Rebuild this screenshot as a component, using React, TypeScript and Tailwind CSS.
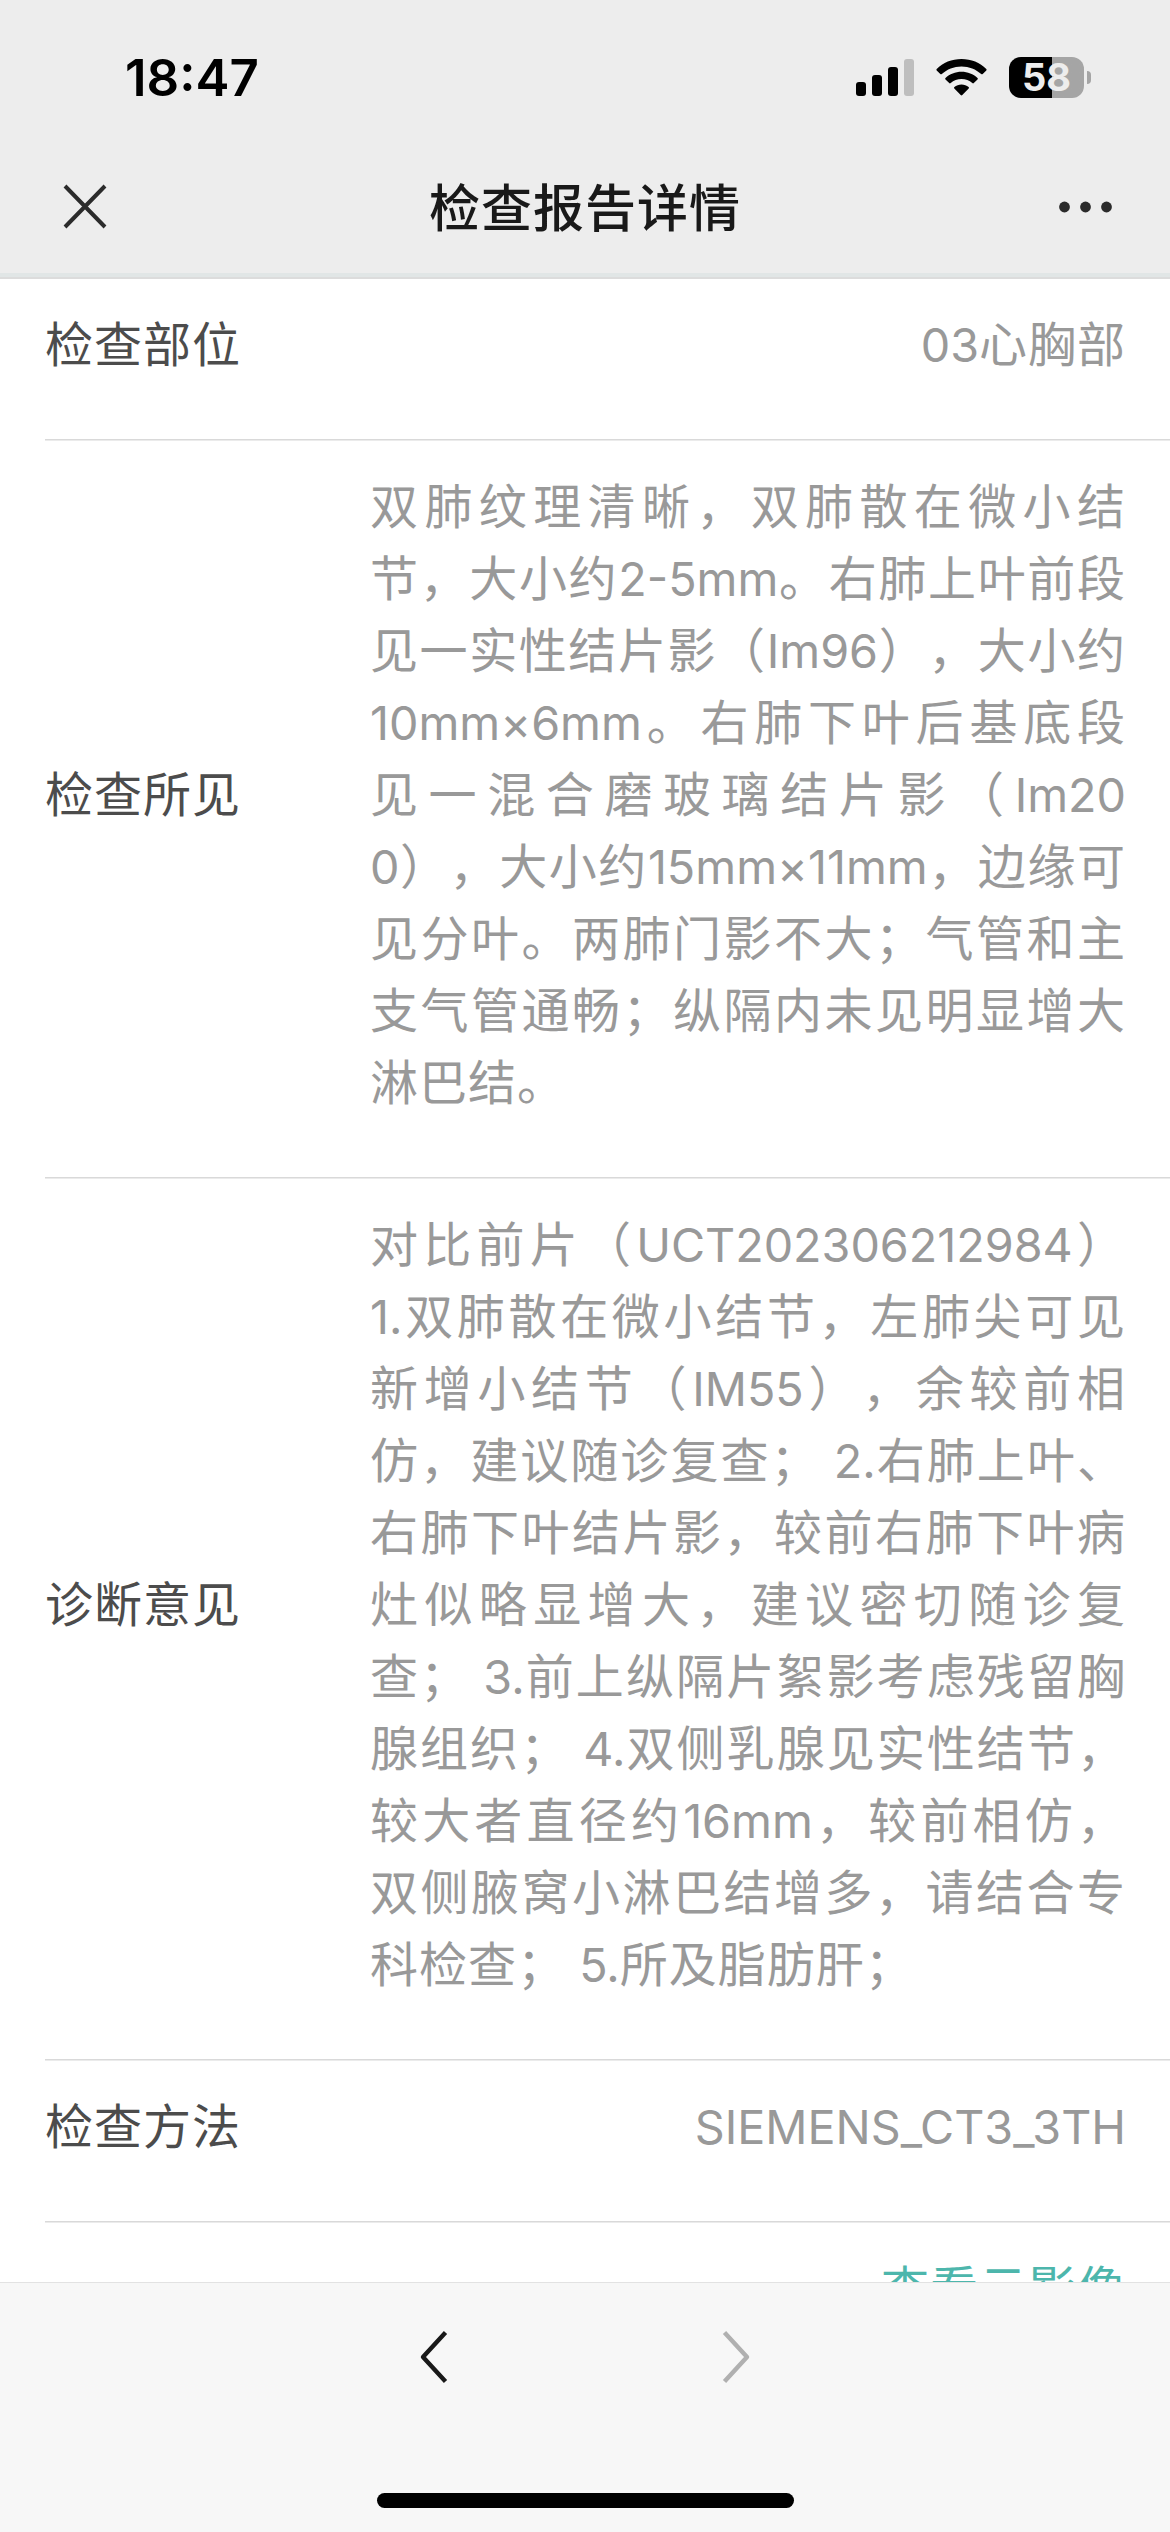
import type { ReactNode } from 'react';

const CJK = "font-['Noto_Sans_CJK_SC','Inter',sans-serif]";

const findings = [
  '双肺纹理清晰，双肺散在微小结',
  '节，大小约2-5mm。右肺上叶前段',
  '见一实性结片影（Im96），大小约',
  '10mm×6mm。右肺下叶后基底段',
  '见一混合磨玻璃结片影（Im20',
  '0），大小约15mm×11mm，边缘可',
  '见分叶。两肺门影不大；气管和主',
  '支气管通畅；纵隔内未见明显增大',
  '淋巴结。',
];

const diagnosis = [
  '对比前片（UCT202306212984）',
  '1.双肺散在微小结节，左肺尖可见',
  '新增小结节（IM55），余较前相',
  '仿，建议随诊复查； 2.右肺上叶、',
  '右肺下叶结片影，较前右肺下叶病',
  '灶似略显增大，建议密切随诊复',
  '查； 3.前上纵隔片絮影考虑残留胸',
  '腺组织； 4.双侧乳腺见实性结节，',
  '较大者直径约16mm，较前相仿，',
  '双侧腋窝小淋巴结增多，请结合专',
  '科检查； 5.所及脂肪肝；',
];

/* Latin runs are set in Inter, slightly smaller than the Chinese text. */
function Mixed({ text }: { text: string }) {
  return (
    <>
      {text.split(/([\x20-\x7e×]+)/).map((part, i) =>
        i % 2 ? (
          <span key={i} className="font-['Inter',sans-serif] text-[46.7px] leading-none tracking-[0px]">
            {part}
          </span>
        ) : (
          part
        ),
      )}
    </>
  );
}

function Paragraph({ lines }: { lines: string[] }) {
  return (
    <div className="w-[756px]">
      {lines.map((line, i) => (
        <div
          key={i}
          className={
            i === lines.length - 1
              ? 'h-[72px] whitespace-nowrap'
              : 'h-[72px] text-justify [text-align-last:justify]'
          }
        >
          <Mixed text={line} />
        </div>
      ))}
    </div>
  );
}

function Row({ label, children }: { label: string; children: ReactNode }) {
  return (
    <div className="ml-[45px]">
      <div className="flex items-center justify-between pt-[26px] pr-[44px] pb-[62px]">
        <div className="text-[#4c4c4c]">{label}</div>
        {children}
      </div>
      <div className="h-[2px] border-t border-[#d9d9d9] bg-[#ebebeb]" />
    </div>
  );
}

function StatusIcons() {
  return (
    <div className="flex items-center">
      <svg width="58" height="37" viewBox="0 0 58 37">
        <rect x="0" y="23" width="10" height="14" rx="3" fill="#000" />
        <rect x="16" y="16" width="10" height="21" rx="3" fill="#000" />
        <rect x="32" y="8" width="10" height="29" rx="3" fill="#000" />
        <rect x="48" y="0" width="10" height="37" rx="3" fill="#bebebe" />
      </svg>
      <svg className="ml-[22px]" width="51" height="37" viewBox="0 0 51 37">
        <path
          d="M25.5 0C35.2 0 44 3.7 50.3 9.9Q51 10.6 50.3 11.4L46.7 15Q46 15.7 45.2 15C40 10.2 33.1 7.4 25.5 7.4S11 10.2 5.8 15Q5 15.7 4.3 15L.7 11.4Q0 10.6.7 9.9C7 3.7 15.8 0 25.5 0Z"
          fill="#000"
        />
        <path
          d="M25.5 12.8C31.7 12.8 37.3 15.1 41.5 18.9Q42.3 19.7 41.5 20.4L37.8 24.1Q37.1 24.8 36.3 24.1C33.4 21.6 29.6 20.1 25.5 20.1S17.6 21.6 14.7 24.1Q13.9 24.8 13.2 24.1L9.5 20.4Q8.7 19.7 9.5 18.9C13.7 15.1 19.3 12.8 25.5 12.8Z"
          fill="#000"
        />
        <path
          d="M25.5 25.5C28.2 25.5 30.7 26.4 32.6 28Q33.4 28.8 32.7 29.5L26.3 36.1Q25.5 36.9 24.7 36.1L18.3 29.5Q17.6 28.8 18.4 28C20.3 26.4 22.8 25.5 25.5 25.5Z"
          fill="#000"
        />
      </svg>
      <div className="ml-[22px] flex h-[41px] w-[75px] items-center justify-center rounded-[12px] bg-linear-to-r from-black from-[57.3%] to-[#a5a5a5] to-[57.3%] font-['Inter',sans-serif] text-[38px] leading-[41px] font-bold tracking-[0px] text-[#ededed]">
        58
      </div>
      <div className="ml-[3px] h-[13px] w-[4px] rounded-r-full bg-[#a5a5a5]" />
    </div>
  );
}

export default function App() {
  return (
    <div
      className={`${CJK} flex h-[2532px] w-[1170px] flex-col overflow-hidden bg-white text-[48px] leading-[72px] tracking-[1px] text-[#999] [text-spacing-trim:space-all]`}
      lang="zh-CN"
    >
      <header className="h-[273px] shrink-0 bg-[#ededed]">
        <div className="flex h-[155px] items-center justify-between pr-[79px] pl-[125px]">
          <div className="font-['Inter',sans-serif] text-[51px] leading-[60px] font-semibold tracking-[0px] text-black">
            18:47
          </div>
          <StatusIcons />
        </div>
        <div className="flex h-[102px] items-center justify-between px-[55px]">
          <svg width="60" height="60" viewBox="0 0 60 60" fill="none" stroke="#2b2b2b" strokeWidth="4">
            <path d="M10 10L50 51M50 10L10 51" />
          </svg>
          <div className="pb-[3px] text-[51px] font-medium tracking-[1px] text-[#191919]">检查报告详情</div>
          <svg width="60" height="60" viewBox="0 0 60 60" fill="#2b2b2b">
            <circle cx="9.5" cy="31" r="5.4" />
            <circle cx="30.5" cy="31" r="5.4" />
            <circle cx="51.5" cy="31" r="5.4" />
          </svg>
        </div>
      </header>
      <div className="h-[6px] shrink-0 border-b-2 border-[#dcdcdc] bg-[#e1e6e6]" />

      <main className="h-[2003px] shrink-0 overflow-hidden">
        <Row label="检查部位">
          <div className="h-[72px]">
            <Mixed text="03心胸部" />
          </div>
        </Row>
        <Row label="检查所见">
          <Paragraph lines={findings} />
        </Row>
        <Row label="诊断意见">
          <Paragraph lines={diagnosis} />
        </Row>
        <Row label="检查方法">
          <div className="h-[72px]">
            <Mixed text="SIEMENS_CT3_3TH" />
          </div>
        </Row>
        <div className="pt-[26px] pr-[44px] text-right text-[#4db6ac]">查看云影像</div>
      </main>

      <footer className="flex grow flex-col items-center border-t border-[#e2e2e2] bg-[#f7f7f7]">
        <div className="mt-[44px] flex w-[340px] justify-between">
          <svg width="40" height="60" viewBox="0 0 40 60" fill="none" stroke="#191919" strokeWidth="4.4">
            <path d="M30.5 5.5L8 30L30.5 54.5" strokeLinejoin="round" />
          </svg>
          <svg width="40" height="60" viewBox="0 0 40 60" fill="none" stroke="#b0b0b0" strokeWidth="4.4">
            <path d="M9.5 5.5L32 30L9.5 54.5" strokeLinejoin="round" />
          </svg>
        </div>
        <div className="mt-[106px] h-[15px] w-[417px] rounded-full bg-black" />
      </footer>
    </div>
  );
}
